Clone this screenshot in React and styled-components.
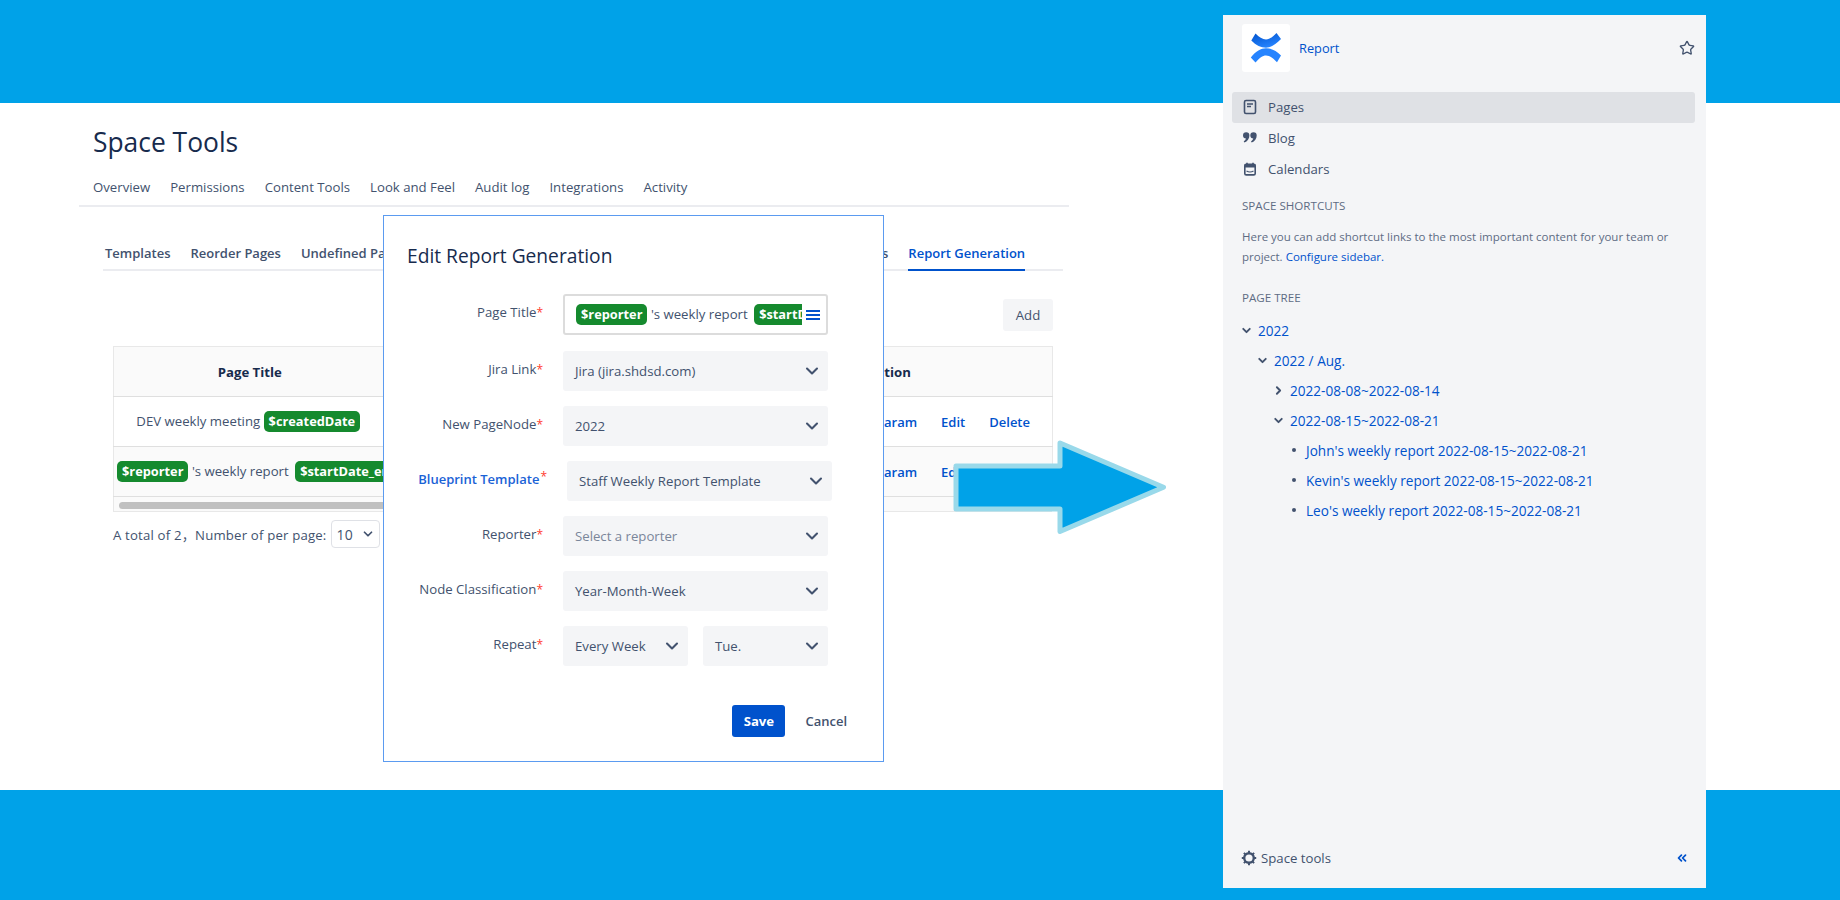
import React from 'react'
import styled, { createGlobalStyle } from 'styled-components'
import { ChevronDown, ChevronRight, ChevronsLeft, Star } from 'lucide-react'

const GlobalStyle = createGlobalStyle`
    html, body {
        margin: 0;
        padding: 0;
        background: #00a2e8;
        font-family: "Open Sans", "Noto Sans", "Noto Sans CJK SC", "Liberation Sans", sans-serif;
        font-size: 13.2px;
        color: #42526e;
    }
`

const Page = styled.div`
    position: relative;
    width: 1840px;
    height: 900px;
    padding-top: 103px;
    box-sizing: border-box;
    overflow: hidden;
    background: #00a2e8;
`

const Band = styled.main`
    height: 687px;
    background: #fff;
    padding: 21px 0 0 79px;
    box-sizing: border-box;
`

const Title = styled.h1`
    margin: 0 0 0 14px;
    font-size: 26.4px;
    line-height: 36px;
    font-weight: 500;
    color: #172b4d;
`

const TopNav = styled.nav`
    display: flex;
    gap: 20px;
    width: 990px;
    box-sizing: border-box;
    margin-top: 17px;
    padding: 0 0 8px 14px;
    line-height: 20px;
    border-bottom: 2px solid #ebecf0;
`

const SubNav = styled.nav`
    display: flex;
    gap: 20px;
    width: 960px;
    box-sizing: border-box;
    margin: 36px 0 0 24px;
    padding-left: 2px;
    border-bottom: 2px solid #ebecf0;
`

const SubTab = styled.a`
    display: block;
    padding-bottom: 6px;
    margin-bottom: -2px;
    margin-left: ${(p) => p.$skip || 0}px;
    font-size: 13px;
    line-height: 20px;
    font-weight: 600;
    white-space: nowrap;
    color: ${(p) => (p.$active ? '#0052cc' : '#42526e')};
    border-bottom: 2px solid ${(p) => (p.$active ? '#0052cc' : 'transparent')};
`

const TableArea = styled.section`
    width: 940px;
    margin-left: 34px;
`

const AddRow = styled.div`
    display: flex;
    justify-content: flex-end;
    margin: 28px 0 15px;
`

const AddButton = styled.button`
    width: 50px;
    height: 32px;
    border: 0;
    border-radius: 3px;
    background: #f4f5f7;
    color: #42526e;
    font: 500 13.2px "Open Sans", sans-serif;
`

const Table = styled.table`
    width: 939px;
    table-layout: fixed;
    border-collapse: collapse;
    border: 1px solid #e8e8e8;
    border-bottom: 0;
`

const HeadCell = styled.th`
    height: 49px;
    padding: 0;
    background: #fafafa;
    color: #172b4d;
    font-weight: 700;
    border-bottom: 1px solid #dfdfdf;
`

const Row = styled.tr`
    background: ${(p) => (p.$shaded ? '#fafafa' : '#fff')};
    border-bottom: 1px solid #dfdfdf;
`

const TitleCell = styled.td`
    height: 49px;
    padding: 0 6px 0 3px;
    overflow: hidden;
    white-space: nowrap;
    text-align: center;
`

const ActionCell = styled.td`
    padding: 0 22px 0 0;
`

const Actions = styled.div`
    display: flex;
    justify-content: flex-end;
    gap: 24px;
    color: #0052cc;
    font-size: 13px;
    font-weight: 600;
`

const Badge = styled.span`
    display: inline-block;
    height: 21px;
    padding: 0 5px;
    margin: ${(p) => p.$margin || '0'};
    font-size: 12.8px;
    line-height: 21px;
    border-radius: 5px;
    background: #158a2e;
    color: #fff;
    font-weight: 700;
    white-space: nowrap;
`

const ScrollTrack = styled.div`
    width: 939px;
    height: 15px;
    padding: 5px 4px 3px 5px;
    box-sizing: border-box;
    background: #fafafa;
    border: 1px solid #e8e8e8;
    border-top: 0;
`

const ScrollThumb = styled.div`
    width: 500px;
    height: 7px;
    border-radius: 4px;
    background: #c0c0c0;
`

const Pager = styled.div`
    display: flex;
    align-items: center;
    gap: 4px;
    margin-top: 8px;
    letter-spacing: 0.18px;
`

const PageSize = styled.div`
    display: flex;
    align-items: center;
    justify-content: space-between;
    width: 49px;
    height: 28px;
    padding: 0 4px 0 5px;
    box-sizing: border-box;
    border: 1px solid #dfe1e6;
    border-radius: 4px;
    font-size: 14px;
`

const Modal = styled.div`
    position: absolute;
    left: 383px;
    top: 215px;
    width: 501px;
    height: 547px;
    padding: 26px 0 0 0;
    box-sizing: border-box;
    background: #fff;
    border: 1px solid #5b9bf0;
`

const ModalTitle = styled.h2`
    margin: 0 0 24px 23px;
    font-size: 19.2px;
    line-height: 28px;
    font-weight: 500;
    color: #172b4d;
`

const Form = styled.div`
    display: flex;
    flex-direction: column;
    gap: 15px;
`

const FormRow = styled.div`
    display: grid;
    grid-template-columns: ${(p) => (p.$nudge ? '163px' : '159px')} 265px;
    column-gap: 20px;
    align-items: start;
`

const Label = styled.label`
    padding-top: 8px;
    text-align: right;
    line-height: 20px;
    white-space: nowrap;
    font-size: ${(p) => (p.$link ? '13px' : '13.2px')};
    color: ${(p) => (p.$link ? '#1a62d6' : '#42526e')};
    font-weight: ${(p) => (p.$link ? 600 : 400)};
`

const Req = styled.sup`
    color: #ff3b30;
    font-size: 12px;
    font-weight: 400;
    line-height: 0;
    vertical-align: ${(p) => (p.$raised ? '3px' : '0')};
    margin-left: ${(p) => (p.$raised ? '1px' : '0')};
`

const Select = styled.div`
    display: flex;
    align-items: center;
    justify-content: space-between;
    height: 40px;
    padding: 0 6px 0 12px;
    box-sizing: border-box;
    border-radius: 3px;
    background: #f4f5f7;
    color: ${(p) => (p.$placeholder ? '#7a869a' : '#42526e')};
    white-space: nowrap;
`

const RepeatGroup = styled.div`
    display: grid;
    grid-template-columns: 125px 125px;
    column-gap: 15px;
`

const TitleInput = styled.div`
    display: flex;
    align-items: center;
    height: 41px;
    padding: 0 6px 0 11px;
    box-sizing: border-box;
    border: 2px solid #dcdcdc;
    border-radius: 3px;
    margin-bottom: 1px;
`

const TitleTokens = styled.div`
    flex: 1;
    overflow: hidden;
    white-space: nowrap;
`

const MenuIcon = styled.span`
    display: flex;
    flex-direction: column;
    gap: 2px;
    width: 14px;
    margin-left: 4px;

    i {
        display: block;
        height: 2px;
        background: #0052cc;
    }
`

const ModalFooter = styled.div`
    display: flex;
    align-items: center;
    justify-content: flex-end;
    gap: 20px;
    margin-top: 39px;
    padding-right: 36px;
`

const SaveButton = styled.button`
    width: 53px;
    height: 32px;
    border: 0;
    border-radius: 3px;
    background: #0052cc;
    color: #fff;
    font: 700 13.2px "Open Sans", sans-serif;
`

const CancelLink = styled.a`
    font-weight: 600;
    font-size: 13px;
    color: #42526e;
`

const Arrow = styled.svg`
    position: absolute;
    left: 950px;
    top: 438px;
`

const Sidebar = styled.aside`
    position: absolute;
    left: 1223px;
    top: 15px;
    width: 483px;
    height: 873px;
    display: flex;
    flex-direction: column;
    padding: 9px 11px 0 9px;
    box-sizing: border-box;
    background: #f4f5f7;
`

const SpaceHeader = styled.div`
    display: flex;
    align-items: center;
    height: 48px;
    padding: 0 0 0 10px;
`

const LogoBox = styled.div`
    display: flex;
    width: 48px;
    height: 48px;
    border-radius: 3px;
    background: #fff;
`

const SpaceName = styled.a`
    flex: 1;
    margin-left: 9px;
    font-size: 12.8px;
    color: #0052cc;
`

const MenuList = styled.ul`
    list-style: none;
    margin: 20px 0 0;
    padding: 0;
`

const MenuItem = styled.li`
    display: flex;
    align-items: center;
    gap: 10px;
    height: 31px;
    padding: 0 0 1px 10px;
    box-sizing: border-box;
    border-radius: 3px;
    background: ${(p) => (p.$active ? '#dfe1e5' : 'transparent')};
`

const SectionTitle = styled.h3`
    margin: ${(p) => p.$margin};
    padding-left: 10px;
    font-size: 11.6px;
    line-height: 16px;
    font-weight: 500;
    color: #5e6c84;
`

const Hint = styled.p`
    margin: 13px 0 0;
    padding-left: 10px;
    font-size: 11.5px;
    line-height: 20px;
    color: #5e6c84;

    a {
        color: #0052cc;
    }
`

const Tree = styled.ul`
    list-style: none;
    margin: 9px 0 0;
    padding: 0;
    flex: 1;
    font-size: 13.6px;
`

const TreeRow = styled.li`
    display: flex;
    align-items: center;
    height: 30px;
    padding-left: ${(p) => 10 + p.$level * 16}px;
    color: #0052cc;
    white-space: nowrap;
`

const TreeToggle = styled.span`
    display: flex;
    align-items: center;
    width: 16px;
    margin-left: -2px;
    padding-right: 2px;
    color: #42526e;
`

const Dot = styled.i`
    display: block;
    width: 4px;
    height: 4px;
    margin: 0 10px 0 2px;
    border-radius: 50%;
    background: #42526e;
`

const SideFooter = styled.div`
    display: flex;
    align-items: center;
    gap: 4px;
    height: 38px;
    padding: 0 6px 11px 9px;
`

const CollapseButton = styled.span`
    display: flex;
    margin-left: auto;
    color: #0052cc;
`

const Confluence = () => (
    <svg width="48" height="48" viewBox="0 0 48 48">
        <defs>
            <linearGradient id="conf" x1="0" y1="0" x2="0.5" y2="1">
                <stop offset="0" stopColor="#0052cc" />
                <stop offset="1" stopColor="#2684ff" />
            </linearGradient>
        </defs>
        <path fill="url(#conf)" d="M13.500 9.500C17 13 20.500 15.500 24 15.500C27.500 15.500 30.500 13 34.500 9L39 15C33.500 20.500 28.500 23.800 24 23.800C19 23.800 14 21.500 9.300 16.500Z" />
        <path fill="#2684ff" d="M8.800 33.500C14 27 19 24.200 24 24.200C29.500 24.200 34 26.500 39 31.500L35 38.300C31 34 27.500 31.500 24 31.500C20.500 31.500 17.500 34 13.500 38.500Z" />
    </svg>
)

const PagesIcon = () => (
    <svg width="16" height="16" viewBox="0 0 16 16" fill="none">
        <rect x="2.500" y="1.500" width="11" height="13" rx="1.500" stroke="#42526e" strokeWidth="1.600" />
        <path d="M5 5h6M5 7.500h4" stroke="#42526e" strokeWidth="1.400" />
    </svg>
)

const QuoteIcon = () => (
    <svg width="16" height="16" viewBox="0 0 16 16" fill="#42526e">
        <path d="M1 5.500a3.200 3.200 0 1 1 6.400 0c0 3.200-2 6-5 7l-.7-1.200c1.200-.7 2-1.600 2.300-2.700A3.200 3.200 0 0 1 1 5.500z" />
        <path d="M8.300 5.500a3.200 3.200 0 1 1 6.400 0c0 3.200-2 6-5 7l-.7-1.200c1.200-.7 2-1.600 2.300-2.700A3.200 3.200 0 0 1 8.300 5.500z" />
    </svg>
)

const CalendarIcon = () => (
    <svg width="16" height="16" viewBox="0 0 16 16" fill="none">
        <rect x="2.800" y="3.300" width="10.400" height="10.600" rx="1.500" stroke="#42526e" strokeWidth="1.600" />
        <path d="M2.500 3.500h11v3h-11z" fill="#42526e" />
        <path d="M5 1.800v2M11 1.800v2" stroke="#42526e" strokeWidth="1.600" />
        <path d="M4.500 10q3.500 2 7 0" stroke="#42526e" strokeWidth="1.200" />
    </svg>
)

const GearIcon = () => (
    <svg width="16" height="16" viewBox="0 0 16 16" fill="none" stroke="#42526e">
        <circle cx="8" cy="8" r="4.800" strokeWidth="2.400" />
        <path d="M8 .8v2.400M8 12.800v2.400M.8 8h2.400M12.800 8h2.400M2.900 2.900l1.700 1.700M11.400 11.400l1.700 1.700M2.900 13.100l1.700-1.700M11.400 4.600l1.700-1.700" strokeWidth="2" />
    </svg>
)

const FormSelect = ({ children, placeholder }) => (
    <Select $placeholder={placeholder}>
        {children}
        <ChevronDown size={20} strokeWidth={2.500} color="#42526e" />
    </Select>
)

const treeRows = [
    { level: 0, name: '2022', open: true },
    { level: 1, name: '2022 / Aug.', open: true },
    { level: 2, name: '2022-08-08~2022-08-14', open: false },
    { level: 2, name: '2022-08-15~2022-08-21', open: true },
    { level: 3, name: "John's weekly report 2022-08-15~2022-08-21", leaf: true },
    { level: 3, name: "Kevin's weekly report 2022-08-15~2022-08-21", leaf: true },
    { level: 3, name: "Leo's weekly report 2022-08-15~2022-08-21", leaf: true },
]

const App = () => {
    return (
        <Page>
            <GlobalStyle />
            <Band>
                <Title>Space Tools</Title>
                <TopNav>
                    <span>Overview</span>
                    <span>Permissions</span>
                    <span>Content Tools</span>
                    <span>Look and Feel</span>
                    <span>Audit log</span>
                    <span>Integrations</span>
                    <span>Activity</span>
                </TopNav>
                <SubNav>
                    <SubTab>Templates</SubTab>
                    <SubTab>Reorder Pages</SubTab>
                    <SubTab>Undefined Pages</SubTab>
                    <SubTab>Orphaned Pages</SubTab>
                    <SubTab>Attachments</SubTab>
                    <SubTab $skip={190}>Exports</SubTab>
                    <SubTab $active>Report Generation</SubTab>
                </SubNav>
                <TableArea>
                    <AddRow>
                        <AddButton>Add</AddButton>
                    </AddRow>
                    <Table>
                        <colgroup>
                            <col style={{ width: 272 }} />
                            <col style={{ width: 317 }} />
                            <col style={{ width: 350 }} />
                        </colgroup>
                        <thead>
                            <tr>
                                <HeadCell>Page Title</HeadCell>
                                <HeadCell>Jira Link</HeadCell>
                                <HeadCell>Operation</HeadCell>
                            </tr>
                        </thead>
                        <tbody>
                            <Row>
                                <TitleCell>
                                    DEV weekly meeting <Badge>$createdDate</Badge>
                                </TitleCell>
                                <td />
                                <ActionCell>
                                    <Actions>
                                        <span>Edit Param</span>
                                        <span>Edit</span>
                                        <span>Delete</span>
                                    </Actions>
                                </ActionCell>
                            </Row>
                            <Row $shaded>
                                <TitleCell>
                                    <Badge>$reporter</Badge> 's weekly report <Badge $margin="0 0 0 3px">$startDate_endDate</Badge>
                                </TitleCell>
                                <td />
                                <ActionCell>
                                    <Actions>
                                        <span>Edit Param</span>
                                        <span>Edit</span>
                                        <span>Delete</span>
                                    </Actions>
                                </ActionCell>
                            </Row>
                        </tbody>
                    </Table>
                    <ScrollTrack>
                        <ScrollThumb />
                    </ScrollTrack>
                    <Pager>
                        <span>A total of 2，Number of per page:</span>
                        <PageSize>
                            10
                            <ChevronDown size={14} strokeWidth={3} />
                        </PageSize>
                    </Pager>
                </TableArea>
            </Band>

            <Modal>
                <ModalTitle>Edit Report Generation</ModalTitle>
                <Form>
                    <FormRow>
                        <Label>Page Title<Req>*</Req></Label>
                        <TitleInput>
                            <TitleTokens>
                                <Badge>$reporter</Badge> 's weekly report <Badge $margin="0 0 0 3px">$startDate_endDate</Badge>
                            </TitleTokens>
                            <MenuIcon><i /><i /><i /></MenuIcon>
                        </TitleInput>
                    </FormRow>
                    <FormRow>
                        <Label>Jira Link<Req>*</Req></Label>
                        <FormSelect>Jira (jira.shdsd.com)</FormSelect>
                    </FormRow>
                    <FormRow>
                        <Label>New PageNode<Req>*</Req></Label>
                        <FormSelect>2022</FormSelect>
                    </FormRow>
                    <FormRow $nudge>
                        <Label $link>Blueprint Template<Req $raised>*</Req></Label>
                        <FormSelect>Staff Weekly Report Template</FormSelect>
                    </FormRow>
                    <FormRow>
                        <Label>Reporter<Req>*</Req></Label>
                        <FormSelect placeholder>Select a reporter</FormSelect>
                    </FormRow>
                    <FormRow>
                        <Label>Node Classification<Req>*</Req></Label>
                        <FormSelect>Year-Month-Week</FormSelect>
                    </FormRow>
                    <FormRow>
                        <Label>Repeat<Req>*</Req></Label>
                        <RepeatGroup>
                            <FormSelect>Every Week</FormSelect>
                            <FormSelect>Tue.</FormSelect>
                        </RepeatGroup>
                    </FormRow>
                </Form>
                <ModalFooter>
                    <SaveButton>Save</SaveButton>
                    <CancelLink>Cancel</CancelLink>
                </ModalFooter>
            </Modal>

            <Arrow width="222" height="102" viewBox="0 0 222 102">
                <path
                    d="M6 28H110V5L213.500 49.300L110 93.500V71H6Z"
                    fill="#00a2e8"
                    stroke="#99d9ea"
                    strokeWidth="5"
                    strokeLinejoin="round"
                />
            </Arrow>

            <Sidebar>
                <SpaceHeader>
                    <LogoBox><Confluence /></LogoBox>
                    <SpaceName>Report</SpaceName>
                    <Star size={16} strokeWidth={2} color="#42526e" />
                </SpaceHeader>
                <MenuList>
                    <MenuItem $active><PagesIcon />Pages</MenuItem>
                    <MenuItem><QuoteIcon />Blog</MenuItem>
                    <MenuItem><CalendarIcon />Calendars</MenuItem>
                </MenuList>
                <SectionTitle $margin="13px 0 0">SPACE SHORTCUTS</SectionTitle>
                <Hint>
                    Here you can add shortcut links to the most important content for your team or project. <a>Configure sidebar.</a>
                </Hint>
                <SectionTitle $margin="23px 0 0">PAGE TREE</SectionTitle>
                <Tree>
                    {treeRows.map((row) => (
                        <TreeRow key={row.name} $level={row.level}>
                            {row.leaf ? (
                                <Dot />
                            ) : (
                                <TreeToggle>
                                    {row.open ? <ChevronDown size={13} strokeWidth={3.500} /> : <ChevronRight size={13} strokeWidth={3.500} />}
                                </TreeToggle>
                            )}
                            {row.name}
                        </TreeRow>
                    ))}
                </Tree>
                <SideFooter>
                    <GearIcon />
                    Space tools
                    <CollapseButton><ChevronsLeft size={14} strokeWidth={3} /></CollapseButton>
                </SideFooter>
            </Sidebar>
        </Page>
    )
}

export default App
